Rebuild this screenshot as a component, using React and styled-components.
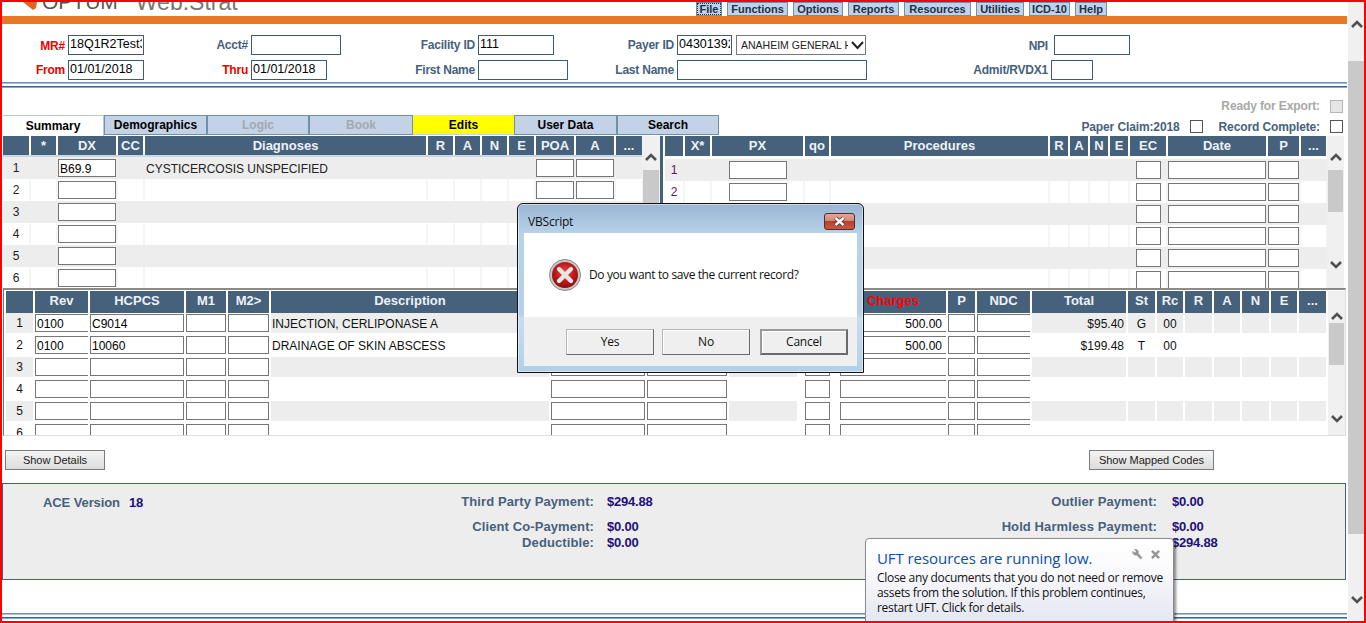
import React from "react";
import styled, { createGlobalStyle } from "styled-components";

const Global = createGlobalStyle`
  html, body { margin: 0; padding: 0; background: #fff; overflow: hidden; }
  * { box-sizing: border-box; }
`;
const SANS = `"Liberation Sans", Arial, sans-serif`;
const UI = `"Open Sans", "Noto Sans", sans-serif`;
const SLATE = "#46617c";

const Page = styled.div`
  position: relative; width: 1366px; height: 623px; overflow: hidden;
  display: flex; padding: 2px 2px 2px 2px; background: #fff; font-family: ${SANS};
`;
const RedFrame = styled.div`
  position: absolute; inset: 0; border: 2px solid #ff0000; z-index: 50; pointer-events: none;
`;
const Content = styled.div`width: 1345px; flex: none; display: flex; flex-direction: column;`;

/* top bar */
const TopBar = styled.div`height: 14px; display: flex; overflow: hidden; flex: none;`;
const Logo = styled.div`
  width: 694px; flex: none; display: flex; align-items: flex-start; padding-left: 21px;
`;
const LogoMark = styled.svg`width: 14px; height: 8px; flex: none; margin-right: 5px;`;
const LogoName = styled.span`
  font-size: 21px; line-height: 20px; margin-top: -10px; color: #55575b;
`;
const LogoProduct = styled.span`
  font-size: 23px; line-height: 20px; margin: -10px 0 0 18px; color: #777;
`;
const Menu = styled.div`display: flex; gap: 5px; align-items: stretch;`;
const MenuButton = styled.div`
  width: ${p => p.$w}px; background: #c3d2e6; border: 1px solid #6f90a8;
  font: bold 11px/12px ${SANS}; color: #1d3045; text-align: center; white-space: nowrap;
  ${p => p.$focus && `outline: 1px dotted #333; outline-offset: -2px;`}
`;
const OrangeBar = styled.div`height: 8px; background: #e97826; flex: none;`;

/* header form */
const HeaderForm = styled.div`
  flex: none; height: 58px; padding-top: 11px; display: grid; row-gap: 5px;
  grid-template-columns: 63px 125px 58px 152px 75px 125px 74px 285px 89px 1fr;
  grid-template-rows: 20px 20px;
`;
const FieldLabel = styled.div`
  font: bold 12px/20px ${SANS}; color: ${p => p.$red ? "#f00000" : SLATE};
  text-align: right; white-space: nowrap; letter-spacing: -.22px;
  padding-top: ${p => p.$drop ? 1 : 0}px;
`;
const FieldCell = styled.div`display: flex; gap: 4px; padding-left: ${p => p.$indent ?? 3}px;`;
const TextBox = styled.input`
  width: ${p => p.$w}px; height: 20px; border: 1px solid #3f5a73; padding: 0 1px 2px; margin: 0;
  font: 12.5px ${SANS}; color: #000; background: #fff; outline: none; border-radius: 0;
`;
const PayerSelect = styled.div`
  width: 130px; height: 20px; border: 1px solid #777; display: flex; align-items: center;
  padding: 0 3px 0 4px; overflow: hidden; background: #fff;
`;
const PayerText = styled.span`
  font: 10.5px ${SANS}; color: #222; width: 107px; overflow: hidden; white-space: nowrap; flex: none;
`;

const Rule = styled.div`
  flex: none; height: 7px;
  background: linear-gradient(#6d92b3 0 1px, #a9c0d6 1px 2px, #fff 2px 4px, ${SLATE} 4px 5px, #8aa8c4 5px 6px, #fff 6px);
  margin-top: ${p => p.$top ?? 0}px;
`;
const ExportRow = styled.div`
  flex: none; height: 26px; padding: 10px 4px 2px 0; display: flex; justify-content: flex-end;
  align-items: center; gap: 10px;
`;
const FlagLabel = styled.span`
  font: bold 12px ${SANS}; color: ${p => p.$muted ? "#a8a8a8" : SLATE}; white-space: nowrap; letter-spacing: -.12px;
`;
const FlagBox = styled.span`
  width: 13px; height: 13px; flex: none; display: block;
  border: 1px solid ${p => p.$muted ? "#b5b5b5" : "#555"}; background: ${p => p.$muted ? "#e6e6e6" : "#fff"};
`;
const TabRow = styled.div`flex: none; height: 21px; display: flex; padding: 0 4px 0 1px;`;
const Tab = styled.div`
  width: ${p => p.$w}px; height: ${p => p.$active ? 21 : 20}px;
  border: 1px solid #6f90a8;
  background: ${p => p.$active ? "#fff" : p.$hot ? "#ffff00" : "#c3d2e6"};
  ${p => p.$active && `border-color: #b5c6d6; border-bottom: none; border-left: none;`}
  ${p => p.$hot && `border-color: #ffff00; border-bottom-color: #c3d2e6;`}
  font: bold 12px/${p => p.$active ? 21 : 18}px ${SANS};
  color: ${p => p.$off ? "#a2a9b0" : "#000"}; text-align: center;
`;
const Flags = styled.div`margin-left: auto; display: flex; align-items: center; height: 21px; padding-top: 2px;`;
const FlagPair = styled.div`display: flex; align-items: center; gap: 10px; margin-left: ${p => p.$gap ?? 0}px;`;

/* data grids */
const GridPair = styled.div`flex: none; height: 152px; display: flex; overflow: hidden;`;
const LeftPane = styled.div`width: 640px; flex: none; padding-left: 1px;`;
const RightPane = styled.div`
  width: 667px; flex: none; border-left: 3px solid ${SLATE}; padding-left: 2px;
`;
const HeadRow = styled.div`
  display: grid; grid-template-columns: ${p => p.$cols}; column-gap: 2px; height: ${p => p.$h}px;
  border-bottom: ${p => p.$rule ? `2px solid #c9d6e6` : "none"};
  margin-bottom: ${p => p.$after ?? 0}px;
`;
const HeadCell = styled.div`
  background: ${SLATE}; color: ${p => p.$red ? "#ff0000" : "#eef2f6"};
  font: bold 13px/19px ${SANS}; text-align: center; white-space: nowrap;
`;
const UpperRow = styled.div`
  display: grid; grid-template-columns: ${p => p.$cols}; column-gap: 2px; height: 22px;
  background: ${p => p.$shade ? "#ededed" : "#f5f5f5"}; align-items: stretch;
`;
const UpperCell = styled.div`
  background: ${p => p.$shade ? "transparent" : "#fff"}; display: flex; align-items: center;
  justify-content: ${p => p.$center ? "center" : "flex-start"};
  font: 12px ${SANS}; color: ${p => p.$purple ? "#5a1470" : "#222"}; white-space: nowrap;
  padding-left: ${p => p.$pad ?? 0}px; padding-top: ${p => p.$pad ? 1 : 0}px;
`;
const GridInput = styled.input`
  width: ${p => p.$w ? `${p.$w}px` : "100%"}; height: 18px; margin: 0; padding: 2px ${p => p.$right ? 4 : 1}px 0 1px;
  border: 1px solid #767676; ${p => p.$open && "border-right: none;"} background: #fff;
  font: 12px ${SANS}; color: #000; outline: none; border-radius: 0;
  text-align: ${p => p.$right ? "right" : "left"};
`;
const VScroll = styled.div`
  width: ${p => p.$w ?? 17}px; flex: none; background: #f0f0f0; display: flex; flex-direction: column;
  align-items: center; margin-left: ${p => p.$left ?? 0}px;
`;
const ArrowBox = styled.svg`
  width: 12px; height: 8px; flex: none; display: block;
  margin-top: ${p => p.$top ?? 0}px; margin-bottom: ${p => p.$bottom ?? 0}px;
`;
const Thumb = styled.div`
  width: ${p => p.$w ? `${p.$w}px` : "100%"}; background: #c9c9c9; height: ${p => p.$h}px; margin-top: ${p => p.$top}px; flex: none;
`;
const Push = styled.div`flex: 1;`;

const Lower = styled.div`
  flex: none; height: 148px; margin: 0 0 0 1px; width: 1343px; display: flex; overflow: hidden;
  border-left: 1px solid #777; border-top: 2px solid #8a8a8a; border-right: 1px solid #ddd; border-bottom: 1px solid #ddd;
  padding-top: 1px;
`;
const LowerTable = styled.div`width: 1324px; flex: none; padding-left: 2px;`;
const LowerRow = styled.div`
  display: grid; grid-template-columns: ${p => p.$cols}; column-gap: 2px; height: 22px; padding-bottom: 2px;
`;
const LowerCell = styled.div`
  background: ${p => p.$shade ? "#ededed" : "transparent"}; display: flex; align-items: center;
  justify-content: ${p => p.$align ?? "flex-start"};
  font: 12px ${SANS}; color: #111; white-space: nowrap;
  padding: ${p => p.$text ? 2 : 0}px ${p => p.$right ?? 0}px 0 ${p => p.$left ?? 0}px;
`;
const ButtonRow = styled.div`
  flex: none; height: 47px; padding: 14px 0 0 3px; display: flex; align-items: flex-start;
`;
const Action = styled.div`
  width: ${p => p.$w}px; height: 20px; border: 1px solid #7b7b7b; margin-left: ${p => p.$left ?? 0}px;
  background: linear-gradient(#f4f4f4, #dcdcdc); font: 11px/18px ${SANS}; color: #222; text-align: center;
`;

/* payment panel */
const Panel = styled.div`
  flex: none; height: 97px; margin-right: 1px; background: #ededed; border: 1px solid ${SLATE};
  display: grid; padding-top: 10px;
  grid-template-columns: 358px 233px 193px 370px 1fr;
  grid-template-rows: 25px 16px 16px;
`;
const AceCell = styled.div`
  padding-left: 40px; font: bold 13px/17px ${SANS}; color: ${SLATE}; display: flex; gap: 9px;
  letter-spacing: -.1px;
`;
const PayLabel = styled.div`
  grid-column: ${p => p.$col}; grid-row: ${p => p.$row};
  text-align: right; font: bold 13px/16px ${SANS}; color: ${SLATE}; white-space: nowrap; letter-spacing: .1px;
`;
const PayValue = styled.div`
  grid-column: ${p => p.$col}; grid-row: ${p => p.$row};
  padding-left: ${p => p.$pad}px; font: bold 13px/16px ${SANS}; color: #1f0f7a; white-space: nowrap;
  letter-spacing: -.2px;
`;
const AceValue = styled.span`color: #1f0f7a;`;

/* dialog */
const Dialog = styled.div`
  position: absolute; left: 517px; top: 203px; width: 347px; height: 170px; z-index: 20;
  border: 1px solid #111; border-radius: 6px 6px 0 0; padding: 0 6px 6px;
  background: linear-gradient(#9ab6d3 0, #b8d2ea 30px, #b4d0e8 110px, #c6ddf1 115px, #b2cfe8 100%);
  display: flex; flex-direction: column; box-shadow: 0 0 0 1px rgba(255,255,255,.5) inset;
`;
const TitleBar = styled.div`
  height: 29px; flex: none; display: flex; align-items: center; justify-content: space-between;
  font: 12px ${UI}; color: #111; padding: 6px 2px 0 4px; letter-spacing: -.2px;
`;
const CloseButton = styled.div`
  width: 31px; height: 17px; border: 1px solid #5a2a24; border-radius: 3px; display: flex;
  align-items: center; justify-content: center;
  background: linear-gradient(#e0a89c 0, #d58775 45%, #b6402b 50%, #c65a40 100%);
`;
const Message = styled.div`
  flex: none; height: 84px; background: #fff; display: flex; align-items: center; gap: 8px; padding: 0 0 0 25px;
  font: 12px ${UI}; color: #111; letter-spacing: -.38px;
`;
const MessageText = styled.span`margin-top: -1px;`;
const DialogFooter = styled.div`
  flex: 1; background: #efefef; display: flex; padding: 12px 9px 0 42px; gap: 8px; align-items: flex-start;
`;
const DialogButton = styled.div`
  width: 88px; height: 26px; margin-left: ${p => p.$left ?? 0}px;
  border: 1px solid #b5b5b5; border-right-color: #6a6a6a; border-bottom-color: #6a6a6a;
  ${p => p.$default && `border: 2px solid #6a6a6a; border-top-color:#9a9a9a; border-left-color:#9a9a9a;`}
  background: #efefef; box-shadow: inset 1px 1px 0 #fff;
  font: 12px/${p => p.$default ? 22 : 24}px ${UI}; color: #111; text-align: center; letter-spacing: -.2px;
`;

/* toast */
const Toast = styled.div`
  position: absolute; left: 865px; top: 538px; width: 309px; height: 90px; z-index: 30;
  border: 1px solid #8a8a8a; border-radius: 4px 4px 0 0; padding: 9px 10px 0 11px;
  background: linear-gradient(#ffffff 0, #fbfbfd 30%, #e3e4ef 100%);
  box-shadow: 2px 2px 3px rgba(0,0,0,.45);
`;
const ToastHead = styled.div`display: flex; align-items: center; justify-content: space-between; height: 21px; padding-right: 3px;`;
const ToastTitle = styled.div`font: 15px/21px ${UI}; color: #0a4fa8; letter-spacing: -.07px; white-space: nowrap;`;
const ToastTools = styled.div`display: flex; gap: 8px; align-items: center; margin-top: -8px;`;
const ToastBody = styled.div`font: 12px/15px ${UI}; color: #111; letter-spacing: -.3px; margin-top: 1px; white-space: nowrap;`;

/* data */
const leftCols = "26px 25px 58px 25px 281px 25px 25px 25px 25px 38px 38px 26px";
const rightCols = "18px 25px 91px 24px 217px 18px 18px 18px 18px 36px 98px 31px 25px";
const lowerCols = "27px 53px 94px 40px 41px 278px 94px 80px 68px 4px 25px 6px 106px 27px 53px 94px 27px 26px 27px 26px 27px 26px 27px";

const Chevron = ({ up, ...p }) => (
  <ArrowBox viewBox="0 0 12 8" {...p}>
    <polyline points={up ? "1,7 6,2 11,7" : "1,1 6,6 11,1"} fill="none" stroke="#505050" strokeWidth="2.6" />
  </ArrowBox>
);

const menuItems = [["File", 26, true], ["Functions", 61], ["Options", 50], ["Reports", 51], ["Resources", 67], ["Utilities", 48], ["ICD-10", 41], ["Help", 32]];
const tabs = [
  { t: "Summary", w: 101, active: true }, { t: "Demographics", w: 103 }, { t: "Logic", w: 102, off: true },
  { t: "Book", w: 104, off: true }, { t: "Edits", w: 101, hot: true }, { t: "User Data", w: 103 }, { t: "Search", w: 102 },
];
const leftHead = ["", "*", "DX", "CC", "Diagnoses", "R", "A", "N", "E", "POA", "A", "..."];
const rightHead = ["", "X*", "PX", "qo", "Procedures", "R", "A", "N", "E", "EC", "Date", "P", "..."];
const lowerHead = ["", "Rev", "HCPCS", "M1", "M2>", "Description", "", "", "", "", "", "", "Charges", "P", "NDC", "Total", "St", "Rc", "R", "A", "N", "E", "..."];

const LeftRow = ({ n }) => {
  const shade = n % 2 === 1;
  return (
    <UpperRow $cols={leftCols} $shade={shade}>
      <UpperCell $shade={shade} $center>{n}</UpperCell>
      <UpperCell $shade={shade} />
      <UpperCell $shade={shade}><GridInput readOnly value={n === 1 ? "B69.9" : ""} /></UpperCell>
      <UpperCell $shade={shade} />
      <UpperCell $shade={shade} $pad={1}>{n === 1 ? "CYSTICERCOSIS UNSPECIFIED" : ""}</UpperCell>
      {[0, 1, 2, 3].map(i => <UpperCell key={i} $shade={shade} />)}
      <UpperCell $shade={shade}><GridInput readOnly value="" /></UpperCell>
      <UpperCell $shade={shade}><GridInput readOnly value="" /></UpperCell>
      <UpperCell $shade={shade} />
    </UpperRow>
  );
};
const RightRow = ({ n }) => {
  const shade = n % 2 === 1;
  return (
    <UpperRow $cols={rightCols} $shade={shade}>
      <UpperCell $shade={shade} $center $purple>{n}</UpperCell>
      <UpperCell $shade={shade} />
      <UpperCell $shade={shade} $center><GridInput readOnly value="" $w={58} /></UpperCell>
      <UpperCell $shade={shade} /><UpperCell $shade={shade} />
      {[0, 1, 2, 3].map(i => <UpperCell key={i} $shade={shade} />)}
      <UpperCell $shade={shade} $center><GridInput readOnly value="" $w={25} /></UpperCell>
      <UpperCell $shade={shade}><GridInput readOnly value="" /></UpperCell>
      <UpperCell $shade={shade}><GridInput readOnly value="" /></UpperCell>
      <UpperCell $shade={shade} />
    </UpperRow>
  );
};
const billing = {
  1: { rev: "0100", code: "C9014", desc: "INJECTION, CERLIPONASE A", chg: "500.00", total: "$95.40", st: "G", rc: "00" },
  2: { rev: "0100", code: "10060", desc: "DRAINAGE OF SKIN ABSCESS", chg: "500.00", total: "$199.48", st: "T", rc: "00" },
};
const BillingRow = ({ n }) => {
  const d = billing[n] || {};
  const shade = n % 2 === 1;
  return (
    <LowerRow $cols={lowerCols}>
      <LowerCell $shade={shade} $align="center">{n}</LowerCell>
      <LowerCell><GridInput readOnly value={d.rev || ""} $open /></LowerCell>
      <LowerCell><GridInput readOnly value={d.code || ""} /></LowerCell>
      <LowerCell><GridInput readOnly value="" /></LowerCell>
      <LowerCell><GridInput readOnly value="" /></LowerCell>
      <LowerCell $shade={shade} $left={1} $text>{d.desc || ""}</LowerCell>
      <LowerCell><GridInput readOnly value="" /></LowerCell>
      <LowerCell><GridInput readOnly value="" /></LowerCell>
      <LowerCell $shade={shade} />
      <LowerCell />
      <LowerCell><GridInput readOnly value="" /></LowerCell>
      <LowerCell />
      <LowerCell><GridInput readOnly value={d.chg || ""} $open $right /></LowerCell>
      <LowerCell><GridInput readOnly value="" /></LowerCell>
      <LowerCell><GridInput readOnly value="" $open /></LowerCell>
      <LowerCell $shade={shade} $align="flex-end" $right={2} $text>{d.total || ""}</LowerCell>
      <LowerCell $shade={shade} $align="center" $text>{d.st || ""}</LowerCell>
      <LowerCell $shade={shade} $align="center" $text>{d.rc || ""}</LowerCell>
      {[0, 1, 2, 3, 4].map(i => <LowerCell key={i} $shade={shade} />)}
    </LowerRow>
  );
};

const ErrorIcon = () => (
  <svg width="32" height="32" viewBox="0 0 32 32" style={{ flex: "none" }}>
    <defs>
      <radialGradient id="errFill" cx="50%" cy="40%" r="60%">
        <stop offset="0%" stopColor="#e84a4a" />
        <stop offset="60%" stopColor="#c01818" />
        <stop offset="100%" stopColor="#8d0c0c" />
      </radialGradient>
    </defs>
    <circle cx="16" cy="16" r="15.5" fill="#c9c9c9" stroke="#8a8a8a" />
    <circle cx="16" cy="16" r="13" fill="url(#errFill)" />
    <path d="M10 10 L22 22 M22 10 L10 22" stroke="#e6e6e6" strokeWidth="4.4" strokeLinecap="round" />
  </svg>
);

export default function App() {
  return (
    <Page>
      <Global />
      <Content>
        <TopBar>
          <Logo>
            <LogoMark viewBox="0 0 14 8"><path d="M0 0 L14 0 L13 6 L10 8 Z" fill="#e8601f" /></LogoMark>
            <LogoName>OPTUM</LogoName>
            <LogoProduct>Web.Strat</LogoProduct>
          </Logo>
          <Menu>
            {menuItems.map(([t, w, f]) => <MenuButton key={t} $w={w} $focus={f}>{t}</MenuButton>)}
          </Menu>
        </TopBar>
        <OrangeBar />
        <HeaderForm>
          <FieldLabel $red $drop>MR#</FieldLabel>
          <FieldCell><TextBox $w={76} readOnly value="18Q1R2Test3" /></FieldCell>
          <FieldLabel>Acct#</FieldLabel>
          <FieldCell><TextBox $w={90} readOnly value="" /></FieldCell>
          <FieldLabel>Facility ID</FieldLabel>
          <FieldCell><TextBox $w={76} readOnly value="111" /></FieldCell>
          <FieldLabel>Payer ID</FieldLabel>
          <FieldCell>
            <TextBox $w={55} readOnly value="04301392" />
            <PayerSelect>
              <PayerText>ANAHEIM GENERAL H</PayerText>
              <svg width="13" height="9" viewBox="0 0 13 9" style={{ flex: "none", marginLeft: 3 }}>
                <polyline points="1,1 6.5,7 12,1" fill="none" stroke="#222" strokeWidth="2" />
              </svg>
            </PayerSelect>
          </FieldCell>
          <FieldLabel $drop>NPI</FieldLabel>
          <FieldCell $indent={6}><TextBox $w={76} readOnly value="" /></FieldCell>

          <FieldLabel $red>From</FieldLabel>
          <FieldCell><TextBox $w={76} readOnly value="01/01/2018" /></FieldCell>
          <FieldLabel $red>Thru</FieldLabel>
          <FieldCell><TextBox $w={76} readOnly value="01/01/2018" /></FieldCell>
          <FieldLabel>First Name</FieldLabel>
          <FieldCell><TextBox $w={90} readOnly value="" /></FieldCell>
          <FieldLabel>Last Name</FieldLabel>
          <FieldCell><TextBox $w={190} readOnly value="" /></FieldCell>
          <FieldLabel>Admit/RVDX1</FieldLabel>
          <FieldCell><TextBox $w={42} readOnly value="" /></FieldCell>
        </HeaderForm>
        <Rule />
        <ExportRow>
          <FlagLabel $muted>Ready for Export:</FlagLabel>
          <FlagBox $muted />
        </ExportRow>
        <TabRow>
          {tabs.map(t => <Tab key={t.t} $w={t.w} $active={t.active} $off={t.off} $hot={t.hot}>{t.t}</Tab>)}
          <Flags>
            <FlagPair><FlagLabel>Paper Claim:2018</FlagLabel><FlagBox /></FlagPair>
            <FlagPair $gap={16}><FlagLabel>Record Complete:</FlagLabel><FlagBox /></FlagPair>
          </Flags>
        </TabRow>
        <GridPair>
          <LeftPane>
            <HeadRow $cols={leftCols} $h={21} $rule>
              {leftHead.map((h, i) => <HeadCell key={i}>{h}</HeadCell>)}
            </HeadRow>
            {[1, 2, 3, 4, 5, 6].map(n => <LeftRow key={n} n={n} />)}
          </LeftPane>
          <VScroll $w={18}>
            <Chevron up $top={17} />
            <Thumb $h={60} $top={9} $w={16} />
          </VScroll>
          <RightPane>
            <HeadRow $cols={rightCols} $h={20} $after={3}>
              {rightHead.map((h, i) => <HeadCell key={i}>{h}</HeadCell>)}
            </HeadRow>
            {[1, 2, 3, 4, 5, 6].map(n => <RightRow key={n} n={n} />)}
          </RightPane>
          <VScroll>
            <Chevron up $top={17} />
            <Thumb $h={42} $top={9} $w={15} />
            <Push />
            <Chevron $bottom={19} />
          </VScroll>
        </GridPair>
        <Lower>
          <LowerTable>
            <HeadRow $cols={lowerCols} $h={22} $after={0}>
              {lowerHead.map((h, i) => <HeadCell key={i} $red={h === "Charges"}>{h}</HeadCell>)}
            </HeadRow>
            {[1, 2, 3, 4, 5, 6].map(n => <BillingRow key={n} n={n} />)}
          </LowerTable>
          <VScroll>
            <Chevron up $top={21} />
            <Thumb $h={42} $top={3} $w={15} />
            <Push />
            <Chevron $bottom={12} />
          </VScroll>
        </Lower>
        <ButtonRow>
          <Action $w={100}>Show Details</Action>
          <Action $w={125} $left={984}>Show Mapped Codes</Action>
        </ButtonRow>
        <Panel>
          <AceCell>ACE Version <AceValue>18</AceValue></AceCell>
          <PayLabel $col={2} $row={1}>Third Party Payment:</PayLabel>
          <PayValue $col={3} $row={1} $pad={13}>$294.88</PayValue>
          <PayLabel $col={4} $row={1}>Outlier Payment:</PayLabel>
          <PayValue $col={5} $row={1} $pad={15}>$0.00</PayValue>
          <PayLabel $col={2} $row={2}>Client Co-Payment:</PayLabel>
          <PayValue $col={3} $row={2} $pad={13}>$0.00</PayValue>
          <PayLabel $col={4} $row={2}>Hold Harmless Payment:</PayLabel>
          <PayValue $col={5} $row={2} $pad={15}>$0.00</PayValue>
          <PayLabel $col={2} $row={3}>Deductible:</PayLabel>
          <PayValue $col={3} $row={3} $pad={13}>$0.00</PayValue>
          <PayLabel $col={4} $row={3}>Total Payment:</PayLabel>
          <PayValue $col={5} $row={3} $pad={15}>$294.88</PayValue>
        </Panel>
        <Rule $top={33} />
      </Content>
      <VScroll $left={1}>
        <Chevron up $top={18} />
        <Thumb $h={473} $top={33} />
        <Push />
        <Chevron $bottom={17} />
      </VScroll>

      <Dialog>
        <TitleBar>
          VBScript
          <CloseButton>
            <svg width="13" height="11" viewBox="0 0 13 11">
              <path d="M2.5 2 L10.5 9 M10.5 2 L2.5 9" stroke="#5a2a24" strokeWidth="4" />
              <path d="M2.5 2 L10.5 9 M10.5 2 L2.5 9" stroke="#fff" strokeWidth="2.4" />
            </svg>
          </CloseButton>
        </TitleBar>
        <Message><ErrorIcon /><MessageText>Do you want to save the current record?</MessageText></Message>
        <DialogFooter>
          <DialogButton>Yes</DialogButton>
          <DialogButton>No</DialogButton>
          <DialogButton $default $left={2}>Cancel</DialogButton>
        </DialogFooter>
      </Dialog>

      <Toast>
        <ToastHead>
          <ToastTitle>UFT resources are running low.</ToastTitle>
          <ToastTools>
            <svg width="11" height="11" viewBox="0 0 12 12">
              <path d="M11 9.5 L6.8 4.8 A3.2 3.2 0 0 0 2.6 .6 L4.6 2.6 L3 4.4 L1 2.4 A3.2 3.2 0 0 0 5 6.6 L9.4 11 Z" fill="#949494" stroke="#949494" strokeWidth=".6" />
            </svg>
            <svg width="9" height="9" viewBox="0 0 10 10">
              <path d="M1 1 L9 9 M9 1 L1 9" stroke="#949494" strokeWidth="2.6" />
            </svg>
          </ToastTools>
        </ToastHead>
        <ToastBody>
          Close any documents that you do not need or remove<br />
          assets from the solution. If this problem continues,<br />
          restart UFT. Click for details.
        </ToastBody>
      </Toast>
      <RedFrame />
    </Page>
  );
}
